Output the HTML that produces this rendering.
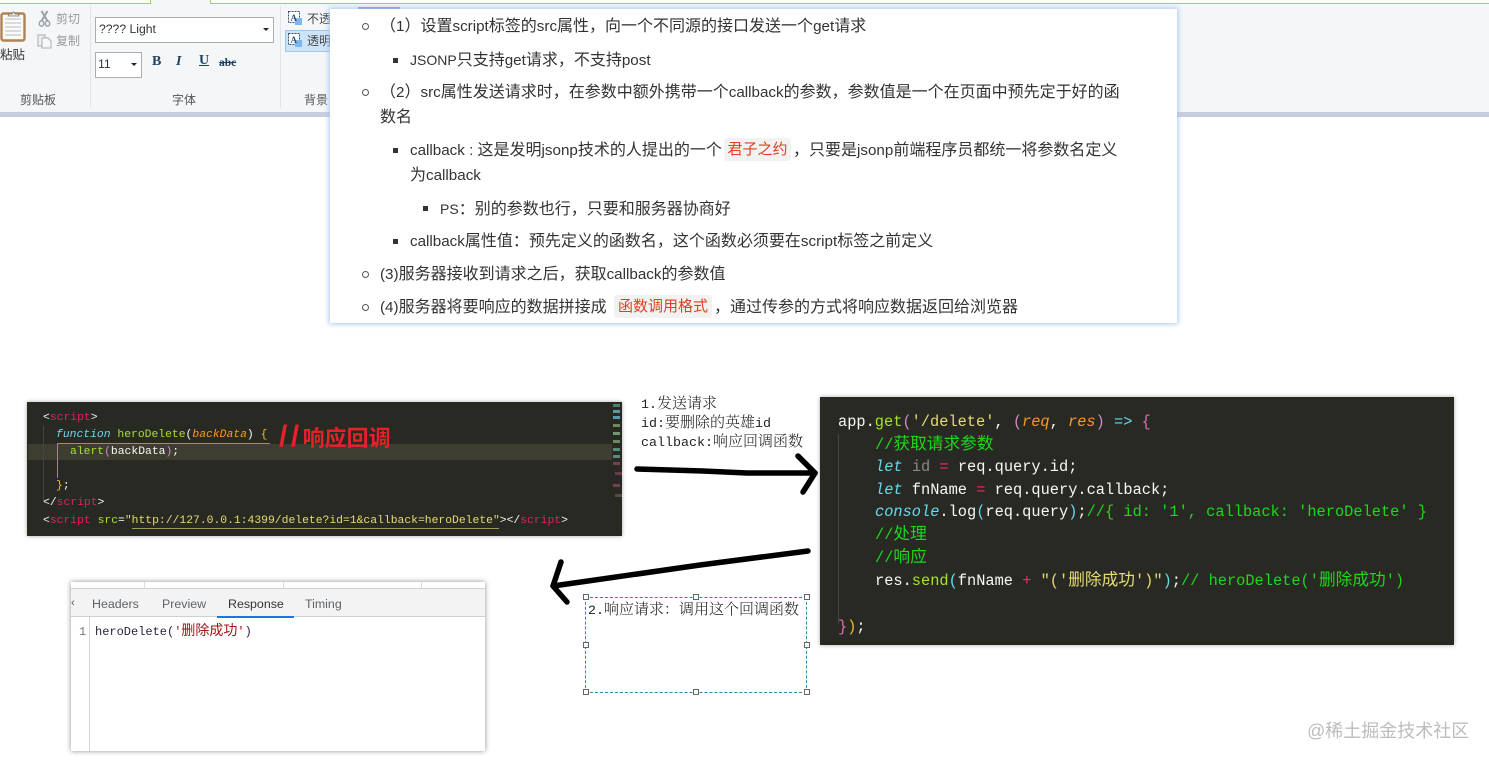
<!DOCTYPE html>
<html lang="zh"><head><meta charset="utf-8"><title>JSONP</title>
<style>
*{box-sizing:border-box;text-spacing-trim:space-all}
html,body{margin:0;padding:0;background:#fff}
body{width:1489px;height:763px;position:relative;overflow:hidden;font-family:"Liberation Sans","Noto Sans CJK SC",sans-serif}
.a{position:absolute}
.t{position:absolute;white-space:nowrap;line-height:20px}
#rib{left:0;top:0;width:1489px;height:112px;background:#f4f6f7}
#ribbar{left:0;top:112px;width:1489px;height:5px;background:#c8ccdf}
.rl{font-size:12px;color:#555}
.rg{font-size:12px;color:#9a9a9a}
.inp{position:absolute;background:#fff;border:1px solid #abadb3}
.sep{position:absolute;top:6px;width:1px;height:102px;background:#e2e4e7}
.caret{position:absolute;width:0;height:0;border-left:3px solid transparent;border-right:3px solid transparent;border-top:3px solid #222}
.fb{font-family:"Liberation Serif",serif;font-weight:bold;color:#1e3f66;font-size:14px}
#pn{left:330px;top:9px;width:847px;height:314px;background:#fff;box-shadow:0 0 5px 1px #a9c8ee}
.l{font-size:16px;color:#333}
.l b{font-weight:normal;font-size:15.2px}
.l b.n{font-size:14px}
.cir{position:absolute;width:7px;height:7px;border:1px solid #555;border-radius:50%}
.sq{position:absolute;width:5px;height:5px;background:#333}
.ct{position:absolute;background:#f2f2f2;color:#e0401e;border-radius:3px;height:23px;line-height:23px;text-align:center;font-size:15px}
.dark{position:absolute;background:#282923;box-shadow:0 0 4px rgba(0,0,0,.35)}
.cl{position:absolute;white-space:pre;font-family:"Liberation Mono","Noto Sans CJK SC",monospace}
#code1 .cl{font-size:11.37px;line-height:17px;left:16px;color:#f8f8f2}
#code2 .cl{font-size:15.33px;line-height:23px;left:18px;color:#f8f8f2}
#code2 .cl.cm{color:#1ed71e}
.c2{font-family:"Noto Sans CJK SC",sans-serif;font-size:16.7px;line-height:1}
.tp{color:#d9265c}.y{color:#e6db74}.gr{color:#a6e22e}.cy{color:#66d9ef;font-style:italic}.cn{color:#66d9ef}
.o{color:#fd971f;font-style:italic}.pk{color:#f92672}.cm{color:#1ed71e}.pu{color:#cf8ac8}.dm{color:#8a8a85}.pkb{color:#e06bb0}.yb{color:#e8c020}
.nt{font-family:"Liberation Mono",monospace;font-size:13.33px;color:#222}
.nt i{font-style:normal;font-family:"Noto Serif CJK SC","Noto Sans CJK SC",serif;font-size:15px;font-weight:300}
.hd{position:absolute;width:6px;height:6px;background:#fff;border:1px solid #666}
#dev{left:71px;top:582px;width:414px;height:169px;background:#fff;box-shadow:0 0 5px rgba(0,0,0,.45)}
.tab{position:absolute;top:12px;font-size:12.4px;line-height:20px;color:#5f6368;white-space:nowrap;font-family:"Liberation Sans",sans-serif}
.mm{position:absolute;width:7px;height:3px}
</style></head><body>

<div class="a" id="rib"></div>
<div class="a" id="ribbar"></div>
<div class="a" style="left:0;top:0;width:150px;height:3px;background:#fff"></div>
<div class="a" style="left:211px;top:0;width:1278px;height:3px;background:#fff"></div>
<div class="a" style="left:0;top:3px;width:151px;height:1px;background:#97d45c"></div>
<div class="a" style="left:150px;top:0;width:1px;height:4px;background:#97d45c"></div>
<div class="a" style="left:210px;top:0;width:1px;height:4px;background:#97d45c"></div>
<div class="a" style="left:210px;top:3px;width:1279px;height:1px;background:#97d45c"></div>

<svg class="a" style="left:0;top:10px" width="90" height="42" viewBox="0 0 90 42">
<rect x="1.5" y="3.5" width="23" height="27" rx="2" fill="#fafafa" stroke="#b08450" stroke-width="2.4"/>
<path d="M5 9h16M5 13h16M5 17h16M5 21h16M5 25h16" stroke="#b8bcc0" stroke-width="1"/>
<path d="M8 6l1-2h3l1-2h1l1 2h3l1 2z" fill="#e8e8e8" stroke="#777" stroke-width=".8"/>
<path d="M41.500 1L47.500 11M47.500 1L41.500 11" stroke="#9ba2a8" stroke-width="2" fill="none"/>
<ellipse cx="41.500" cy="13.500" rx="2.200" ry="2.600" fill="none" stroke="#9ba2a8" stroke-width="1.500"/>
<ellipse cx="47.500" cy="13.500" rx="2.200" ry="2.600" fill="none" stroke="#9ba2a8" stroke-width="1.500"/>
<path d="M38 25h7l0 11h-7z" fill="#eef0f2" stroke="#a9aeb3"/><path d="M42 28h6l3 3v7h-9z" fill="#f6f7f8" stroke="#a9aeb3"/>
</svg>
<div class="t rl" style="left:0;top:45px;font-size:12.5px;color:#333">粘贴</div>
<div class="t rg" style="left:56px;top:9px">剪切</div>
<div class="t rg" style="left:56px;top:31px">复制</div>
<div class="sep" style="left:90px"></div>
<div class="inp" style="left:95px;top:17px;width:179px;height:26px"></div>
<div class="t" style="left:99px;top:19px;font-size:12.2px;color:#333">???? Light</div>
<div class="caret" style="left:263px;top:28px"></div>
<div class="inp" style="left:95px;top:52px;width:47px;height:26px"></div>
<div class="t" style="left:98px;top:54px;font-size:12.3px;color:#333">11</div>
<div class="caret" style="left:131px;top:63px"></div>
<div class="t fb" style="left:152px;top:52px">B</div>
<div class="t fb" style="left:176px;top:52px;font-style:italic">I</div>
<div class="t fb" style="left:199px;top:51px;text-decoration:underline">U</div>
<div class="t fb" style="left:219px;top:53px;font-size:11.5px;text-decoration:line-through">abc</div>
<div class="sep" style="left:280px"></div>
<div class="t rl" style="left:20px;top:90px">剪贴板</div>
<div class="t rl" style="left:172px;top:90px">字体</div>
<div class="t rl" style="left:304px;top:90px">背景</div>
<div class="a" style="left:285px;top:30px;width:50px;height:22px;background:#cde3f8;border:1px solid #9cc6ee"></div>
<svg class="a" style="left:287px;top:10px" width="18" height="40" viewBox="0 0 18 40">
<rect x="1.5" y="1.5" width="11" height="11" fill="#fff" stroke="#34506e" stroke-dasharray="2 1"/><rect x="8" y="8" width="7" height="7" fill="#7db7ec"/><text x="3.500" y="11" font-size="9" font-weight="bold" font-family="Liberation Serif,serif" fill="#34506e">A</text>
<rect x="1.5" y="23.5" width="11" height="11" fill="#fff" stroke="#34506e" stroke-dasharray="2 1"/><rect x="8" y="30" width="7" height="7" fill="#7db7ec"/><text x="3.500" y="33" font-size="9" font-weight="bold" font-family="Liberation Serif,serif" fill="#34506e">A</text>
</svg>
<div class="t rl" style="left:307px;top:9px;color:#444">不透</div>
<div class="t rl" style="left:307px;top:31px;color:#444">透明</div>
<div class="a" style="left:358px;top:7px;width:42px;height:2px;background:#6d93d6"></div>

<div class="a" id="pn"></div>
<div class="cir" style="left:362px;top:23px"></div>
<div class="t l" style="left:380px;top:17px">（<b>1</b>）设置<b>script</b>标签的<b>src</b>属性，向一个不同源的接口发送一个<b>get</b>请求</div>
<div class="sq" style="left:393px;top:58px"></div>
<div class="t l" style="left:410px;top:50px"><b class="n">JSONP</b>只支持<b>get</b>请求，不支持<b>post</b></div>
<div class="cir" style="left:362px;top:89px"></div>
<div class="t l" style="left:380px;top:83px">（<b>2</b>）<b>src</b>属性发送请求时，在参数中额外携带一个<b>callback</b>的参数，参数值是一个在页面中预先定于好的函</div>
<div class="t l" style="left:380px;top:108px">数名</div>
<div class="sq" style="left:393px;top:148px"></div>
<div class="t l" style="left:410px;top:141px"><b>callback : </b>这是发明<b>jsonp</b>技术的人提出的一个</div>
<div class="ct" style="left:724px;top:138px;width:67px">君子之约</div>
<div class="t l" style="left:793px;top:141px">，只要是<b>jsonp</b>前端程序员都统一将参数名定义</div>
<div class="t l" style="left:410px;top:166px">为<b>callback</b></div>
<div class="sq" style="left:423px;top:206px"></div>
<div class="t l" style="left:440px;top:199px"><b class="n">PS</b>：别的参数也行，只要和服务器协商好</div>
<div class="sq" style="left:393px;top:239px"></div>
<div class="t l" style="left:410px;top:232px"><b>callback</b>属性值：预先定义的函数名，这个函数必须要在<b>script</b>标签之前定义</div>
<div class="cir" style="left:362px;top:271px"></div>
<div class="t l" style="left:380px;top:265px"><b>(3)</b>服务器接收到请求之后，获取<b>callback</b>的参数值</div>
<div class="cir" style="left:362px;top:304px"></div>
<div class="t l" style="left:380px;top:298px"><b>(4)</b>服务器将要响应的数据拼接成</div>
<div class="ct" style="left:614px;top:295px;width:98px">函数调用格式</div>
<div class="t l" style="left:714px;top:298px">，通过传参的方式将响应数据返回给浏览器</div>

<div class="dark" id="code1" style="left:27px;top:402px;width:595px;height:134px">
<div class="a" style="left:1px;top:42px;width:584px;height:16px;background:#3e3d32"></div>
<div class="a" style="left:30px;top:41px;width:213px;height:1px;background:#a8962e"></div>
<div class="a" style="left:30px;top:41px;width:1px;height:35px;background:#a8962e"></div>
<div class="a" style="left:16px;top:24px;width:1px;height:74px;background:#444"></div>
<div class="cl" style="top:8px">&lt;<span class="tp">script</span>&gt;</div>
<div class="cl" style="top:25px;left:29px"><span class="cy">function</span> <span class="gr">heroDelete</span>(<span class="o">backData</span>) <span class="yb">{</span></div>
<div class="cl" style="top:42px;left:43px"><span class="gr">alert</span><span class="pu">(</span>backData<span class="pu">)</span>;</div>
<div class="cl" style="top:76px;left:29px"><span class="yb">}</span>;</div>
<div class="cl" style="top:93px">&lt;/<span class="tp">script</span>&gt;</div>
<div class="cl" style="top:111px">&lt;<span class="tp">script</span> <span class="gr">src</span>=<span class="y">"http://127.0.0.1:4399/delete?id=1&amp;callback=heroDelete"</span>&gt;&lt;/<span class="tp">script</span>&gt;</div>
<div class="a" style="left:105px;top:126px;width:367px;height:1px;background:#9a9a50"></div>
<div class="t" style="left:252px;top:24px;font-size:22px;line-height:26px;font-weight:bold;color:#e8202a;font-family:'Liberation Sans','Noto Sans CJK SC',sans-serif"><span style="font-size:30px;letter-spacing:3.500px;line-height:20px">//</span>响应回调</div>
<div class="mm" style="left:586px;top:2px;background:#4d7f6a"></div><div class="mm" style="left:586px;top:8px;background:#5a9ab0"></div><div class="mm" style="left:586px;top:14px;background:#5a9ab0"></div><div class="mm" style="left:586px;top:22px;background:#6a8a5a"></div><div class="mm" style="left:586px;top:30px;background:#6a9a7a"></div><div class="mm" style="left:586px;top:38px;background:#6a8a5a"></div><div class="mm" style="left:586px;top:46px;background:#5a8a7a"></div><div class="mm" style="left:586px;top:53px;background:#5a8a7a"></div><div class="mm" style="left:586px;top:60px;background:#7a3d55"></div><div class="mm" style="left:588px;top:70px;background:#6a3a50"></div><div class="mm" style="left:586px;top:82px;background:#7a3d55"></div><div class="mm" style="left:588px;top:92px;background:#5a4a40"></div>
</div>

<div class="dark" id="code2" style="left:820px;top:397px;width:634px;height:248px">
<div class="a" style="left:18px;top:37px;width:1px;height:190px;background:#444"></div>
<div class="cl" style="top:14px">app.<span class="gr">get</span><span class="pu">(</span><span class="y">'/delete'</span>, <span class="pu">(</span><span class="o">req</span>, <span class="o">res</span><span class="pu">)</span> <span class="cn">=&gt;</span> <span class="pkb">{</span></div>
<div class="cl cm" style="top:37px;left:55px">//<span class="c2">获取请求参数</span></div>
<div class="cl" style="top:59px;left:55px"><span class="cy">let</span> <span class="dm">id</span> <span class="pk">=</span> req.query.id;</div>
<div class="cl" style="top:82px;left:55px"><span class="cy">let</span> fnName <span class="pk">=</span> req.query.callback;</div>
<div class="cl" style="top:104px;left:55px"><span class="cy">console</span>.log<span class="cn">(</span>req.query<span class="cn">)</span>;<span class="cm">//{ id: '1', callback: 'heroDelete' }</span></div>
<div class="cl cm" style="top:127px;left:55px">//<span class="c2">处理</span></div>
<div class="cl cm" style="top:150px;left:55px">//<span class="c2">响应</span></div>
<div class="cl" style="top:173px;left:55px">res.<span class="gr">send</span><span class="cn">(</span>fnName <span class="pk">+</span> <span class="y">"('<span class="c2">删除成功</span>')"</span><span class="cn">)</span>;<span class="cm">// heroDelete('<span class="c2">删除成功</span>')</span></div>
<div class="cl" style="top:219px"><span class="pkb">}</span><span class="yb">)</span>;</div>
</div>

<div class="t nt" style="left:641px;top:393px">1.<i>发送请求</i></div>
<div class="t nt" style="left:641px;top:412px">id:<i>要删除的英雄</i>id</div>
<div class="t nt" style="left:641px;top:431px">callback:<i>响应回调函数</i></div>

<svg class="a" style="left:540px;top:440px" width="290" height="180" viewBox="540 440 290 180">
<g fill="none" stroke="#000" stroke-width="5.500" stroke-linecap="round" stroke-linejoin="round">
<path d="M637 469L703 471L747 473L815 473"/><path d="M798 456L815 473L803 492"/>
<path d="M808 551L700 565L553 586"/><path d="M561 562L553 586L567 602"/>
</g></svg>

<div class="a" style="left:585px;top:597px;width:222px;height:96px;border:1px dashed #2a88a8"></div>
<div class="hd" style="left:583px;top:594px"></div><div class="hd" style="left:693px;top:594px"></div><div class="hd" style="left:804px;top:594px"></div>
<div class="hd" style="left:583px;top:642px"></div><div class="hd" style="left:804px;top:642px"></div>
<div class="hd" style="left:583px;top:689px"></div><div class="hd" style="left:693px;top:689px"></div><div class="hd" style="left:804px;top:689px"></div>
<div class="t nt" style="left:588px;top:599px">2.<i>响应请求：调用这个回调函数</i></div>

<div class="a" id="dev">
<div class="a" style="left:0;top:6px;width:414px;height:29px;background:#f3f3f3;border-top:1px solid #d0d0d0;border-bottom:1px solid #cfcfcf"></div>
<div class="a" style="left:73px;top:0;width:1px;height:6px;background:#ddd"></div><div class="a" style="left:212px;top:0;width:1px;height:6px;background:#ddd"></div><div class="a" style="left:350px;top:0;width:1px;height:6px;background:#ddd"></div>
<div class="t" style="left:0;top:11px;font-size:11px;color:#555">‹</div>
<div class="tab" style="left:21px">Headers</div>
<div class="tab" style="left:91px">Preview</div>
<div class="tab" style="left:157px;color:#333">Response</div>
<div class="tab" style="left:234px">Timing</div>
<div class="a" style="left:146px;top:34px;width:77px;height:2px;background:#1a73e8"></div>
<div class="a" style="left:18px;top:35px;width:1px;height:134px;background:#d4d4d4"></div>
<div class="t" style="left:8px;top:40px;font:12px/20px 'Liberation Mono',monospace;color:#777">1</div>
<div class="t" style="left:24px;top:40px;font:12px/20px 'Liberation Mono','Noto Sans CJK SC',monospace;color:#2a2340">heroDelete(<span style="color:#a31515">'<span style="font-size:14px">删除成功</span>'</span>)</div>
</div>

<div class="t" style="left:1307px;top:721px;font-size:18px;color:#bcbcbc">@稀土掘金技术社区</div>
</body></html>
